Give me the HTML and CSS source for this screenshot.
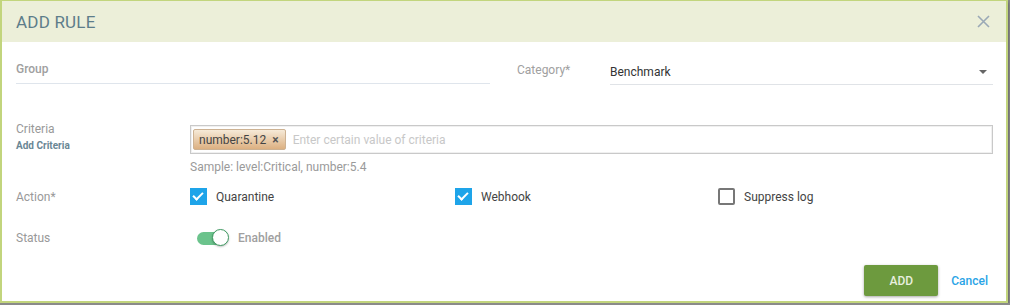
FILE: index.html
```html
<!DOCTYPE html>
<html>
<head>
    <title>Add Rule</title>
    <link rel="stylesheet" href="styles.css">
</head>
<body>
    <div class="dialog">
        <div class="dialog-header">
            <h1>ADD RULE</h1>
            <button class="close-button" aria-label="Close">
                <svg width="13" height="13" viewBox="0 0 13 13">
                    <path d="M1 1L12 12M12 1L1 12" stroke="#9aa9b6" stroke-width="1.6" fill="none"/>
                </svg>
            </button>
        </div>

        <div class="dialog-body">
            <div class="top-row">
                <div class="field group-field">
                    <span class="field-label">Group</span>
                </div>
                <div class="field category-field">
                    <span class="field-label">Category*</span>
                    <div class="select">
                        <span>Benchmark</span>
                        <span class="select-arrow"></span>
                    </div>
                </div>
            </div>

            <div class="form-row criteria-row">
                <div class="row-label">
                    <div>Criteria</div>
                    <a class="add-criteria">Add Criteria</a>
                </div>
                <div class="row-content">
                    <div class="chip-input">
                        <span class="chip">number:5.12 <b>&times;</b></span>
                        <span class="placeholder">Enter certain value of criteria</span>
                    </div>
                    <div class="hint">Sample: level:Critical, number:5.4</div>
                </div>
            </div>

            <div class="form-row action-row">
                <div class="row-label">Action*</div>
                <div class="row-content checks">
                    <label class="check"><span class="box checked"></span>Quarantine</label>
                    <label class="check"><span class="box checked"></span>Webhook</label>
                    <label class="check"><span class="box"></span>Suppress log</label>
                </div>
            </div>

            <div class="form-row status-row">
                <div class="row-label">Status</div>
                <div class="row-content toggle-wrap">
                    <span class="toggle"><span class="knob"></span></span>
                    <span class="toggle-text">Enabled</span>
                </div>
            </div>

            <div class="actions">
                <button class="button add">ADD</button>
                <button class="link-button">Cancel</button>
            </div>
        </div>
    </div>
</body>
</html>
```

FILE: styles.css
```css
body {
    margin: 0;
    padding: 0;
    background-color: #8a8a8a;
    font-family: Roboto, "Liberation Sans", Arial, sans-serif;
}
.dialog {
    width: 1004px;
    height: 300px;
    background-color: white;
    border: 2px solid #c2d57d;
    border-top-width: 1px;
    box-shadow: 0 2px 3px rgba(0, 0, 0, 0.4);
}
.dialog-header {
    height: 41px;
    background-color: #ecefd9;
    display: flex;
    justify-content: space-between;
    align-items: center;
    padding: 0 16px 0 14px;
}
.dialog-header h1 {
    margin: 0;
    font-size: 17px;
    font-weight: normal;
    color: #5d7d8a;
    letter-spacing: 0.2px;
}
.close-button {
    background: none;
    border: none;
    padding: 0;
    cursor: pointer;
    display: flex;
}
.dialog-body {
    padding: 0 13px 0 14px;
}
.top-row {
    display: flex;
    gap: 27px;
    height: 43px;
    padding-top: 18px;
}
.field {
    display: flex;
    align-items: flex-start;
}
.group-field {
    width: 474px;
    height: 24px;
    border-bottom: 1px solid #dfe5ec;
    padding-top: 2px;
    box-sizing: border-box;
}
.category-field {
    flex: 1;
}
.field-label {
    font-size: 12px;
    font-weight: 500;
    color: #a0a0a0;
}
.category-field .field-label {
    width: 93px;
    padding-top: 3px;
    font-weight: normal;
}
.select {
    flex: 1;
    height: 25px;
    box-sizing: border-box;
    border-bottom: 1px solid #e0e3e7;
    display: flex;
    justify-content: space-between;
    align-items: center;
    padding: 0 6px 0 0;
    font-size: 12px;
    color: #333;
}
.select-arrow {
    width: 0;
    height: 0;
    border-left: 4px solid transparent;
    border-right: 4px solid transparent;
    border-top: 4px solid #666;
}
.form-row {
    display: flex;
}
.row-label {
    width: 174px;
    font-size: 12px;
    color: #999;
    flex-shrink: 0;
}
.row-content {
    flex: 1;
}
.criteria-row {
    margin-top: 22px;
}
.criteria-row .row-label {
    margin-top: -3px;
}
.add-criteria {
    display: block;
    margin-top: 4px;
    font-size: 10px;
    font-weight: bold;
    color: #6a8795;
}
.chip-input {
    height: 29px;
    box-sizing: border-box;
    border: 1px solid #c9c9c9;
    box-shadow: inset 0 0 0 1px #f0f0f0;
    display: flex;
    align-items: center;
    padding: 0 3px 0 2px;
    gap: 7px;
}
.chip {
    height: 21px;
    box-sizing: border-box;
    padding: 0 6px 0 5px;
    border: 1px solid #cdb293;
    border-radius: 2px;
    background: linear-gradient(#f6ead8, #dcb081);
    font-size: 12px;
    color: #444;
    display: flex;
    align-items: center;
    gap: 6px;
}
.chip b {
    font-size: 12px;
    color: #555;
}
.placeholder {
    font-size: 12px;
    color: #c8c8c8;
}
.hint {
    margin-top: 6px;
    font-size: 12px;
    color: #9a9a9a;
}
.action-row {
    margin-top: 14px;
    align-items: center;
}
.checks {
    display: grid;
    grid-template-columns: 265px 263px 1fr;
}
.check {
    display: flex;
    align-items: center;
    gap: 9px;
    font-size: 12px;
    color: #444;
}
.box {
    width: 17px;
    height: 17px;
    box-sizing: border-box;
    border: 2px solid #777;
    border-radius: 2px;
    position: relative;
}
.box.checked {
    background-color: #1ea4e9;
    border-color: #1ea4e9;
    border-radius: 0;
}
.box.checked::after {
    content: "";
    position: absolute;
    left: 3px;
    top: 0px;
    width: 4px;
    height: 8px;
    border-right: 2px solid white;
    border-bottom: 2px solid white;
    transform: rotate(45deg);
}
.status-row {
    margin-top: 26px;
    align-items: center;
}
.toggle-wrap {
    display: flex;
    align-items: center;
    padding-left: 7px;
    gap: 10px;
}
.toggle {
    width: 31px;
    height: 13px;
    border-radius: 7px;
    background-color: #6bc38c;
    position: relative;
}
.knob {
    position: absolute;
    right: -1px;
    top: -3px;
    width: 17px;
    height: 17px;
    box-sizing: border-box;
    border-radius: 50%;
    background-color: white;
    border: 1.5px solid #3f9a62;
    box-shadow: 0 1px 2px rgba(0, 0, 0, 0.25);
}
.toggle-text {
    font-size: 12px;
    font-weight: 500;
    color: #a0a0a0;
}
.actions {
    display: flex;
    justify-content: flex-end;
    align-items: center;
    margin-top: 20px;
    gap: 13px;
}
.button {
    width: 74px;
    height: 31px;
    border: none;
    border-radius: 2px;
    background-color: #6d9a3e;
    color: #e8efdf;
    font-family: inherit;
    font-size: 12px;
    font-weight: 500;
    box-shadow: 0 1px 3px rgba(0, 0, 0, 0.35);
    cursor: pointer;
}
.link-button {
    background: none;
    border: none;
    padding: 0 5px 0 0;
    font-family: inherit;
    font-size: 12px;
    font-weight: 500;
    color: #2aa4e6;
    cursor: pointer;
}
```
